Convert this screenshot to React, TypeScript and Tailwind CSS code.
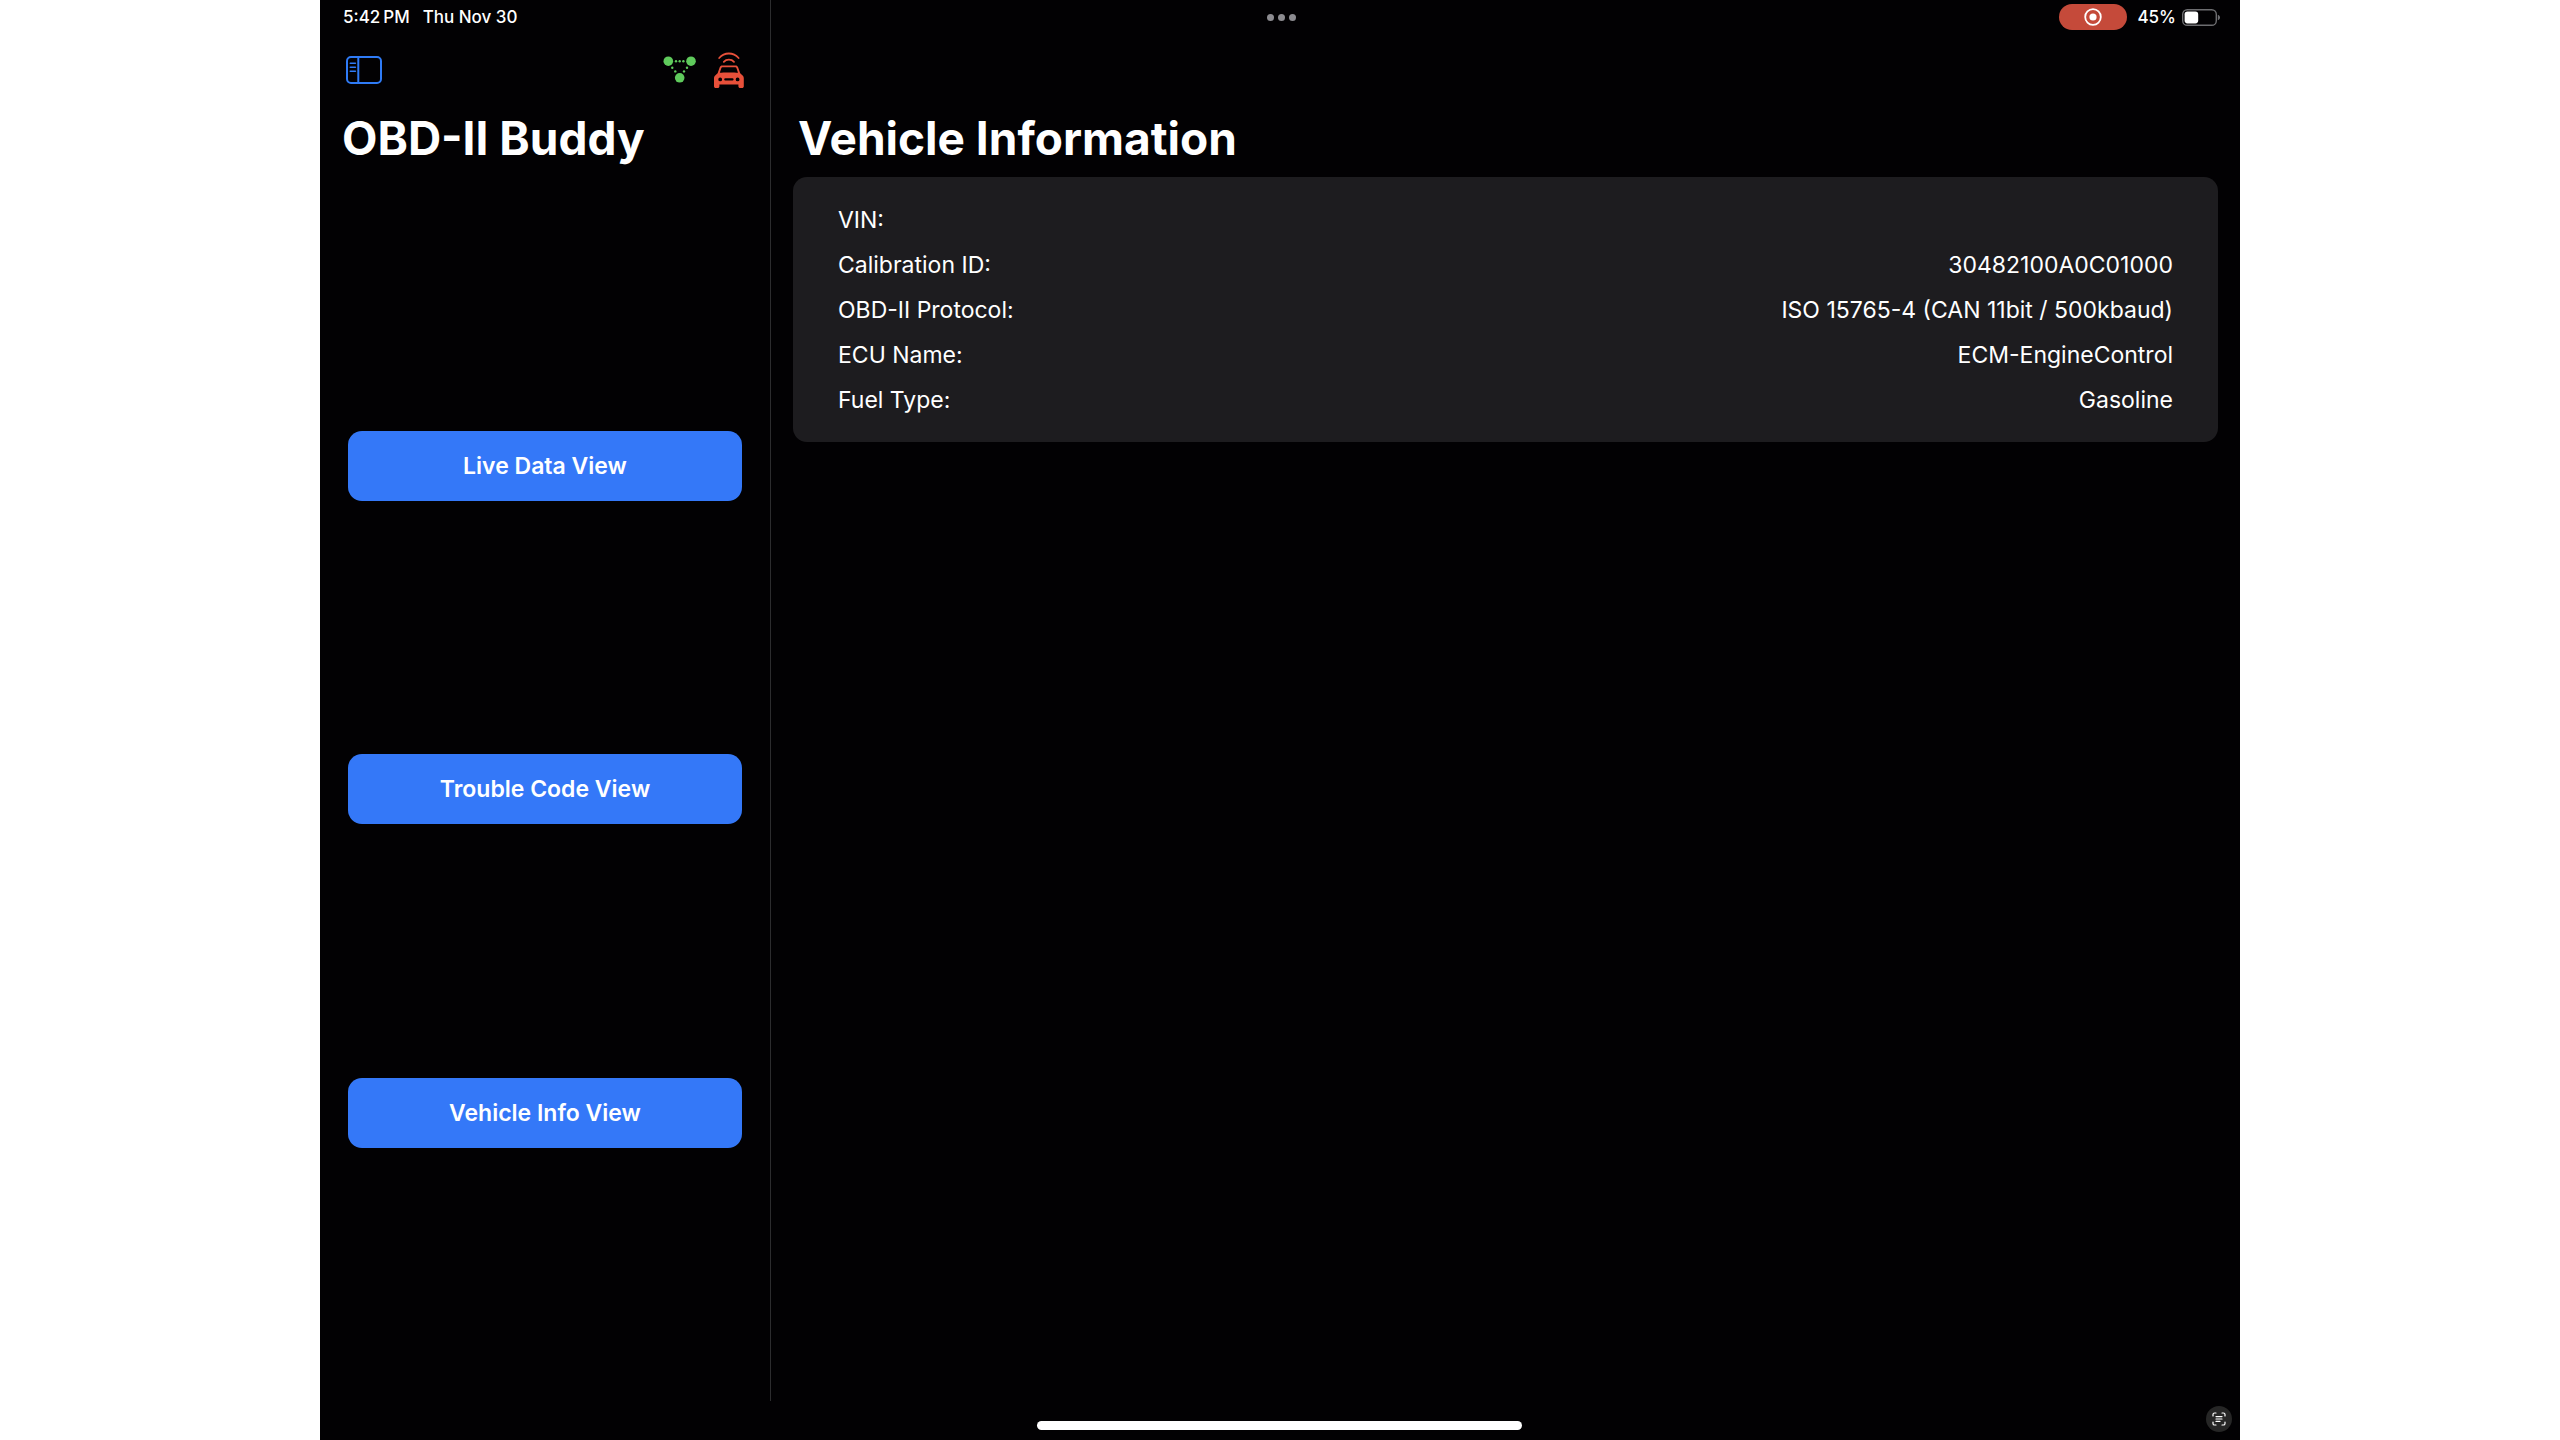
import React from "react";

function SidebarIcon() {
  return (
    <svg width="36" height="28" viewBox="0 0 36 28" fill="none" stroke="currentColor" aria-hidden="true">
      <rect x="1" y="1" width="34" height="26" rx="4" strokeWidth="2" />
      <path d="M12.3 1V27" strokeWidth="2" />
      <path d="M4.3 7.3H9.4M4.3 11.3H9.4M4.3 15.3H9.4" strokeWidth="1.6" strokeLinecap="round" />
    </svg>
  );
}

function NetworkIcon() {
  return (
    <svg width="34" height="28" viewBox="0 0 34 28" fill="currentColor" role="img" aria-label="Adapter connected">
      <circle cx="5.3" cy="5.2" r="4.8" />
      <circle cx="28" cy="5.2" r="4.8" />
      <circle cx="16.7" cy="21.8" r="4.8" />
      <circle cx="13" cy="5.2" r="1.2" />
      <circle cx="16.7" cy="5.2" r="1.2" />
      <circle cx="20.4" cy="5.2" r="1.2" />
      <circle cx="9.3" cy="11.8" r="1.2" />
      <circle cx="12.3" cy="15.4" r="1.2" />
      <circle cx="24" cy="11.8" r="1.2" />
      <circle cx="21" cy="15.4" r="1.2" />
    </svg>
  );
}

function CarIcon() {
  return (
    <svg width="30" height="36" viewBox="0 0 30 36" role="img" aria-label="Vehicle not connected">
      <g fill="none" stroke="currentColor" strokeWidth="1.8" strokeLinecap="round">
        <path d="M5.2 6C10.4 0 19.3 0 24.6 6" />
        <path d="M9.8 9.8C12.4 7 17.4 7 20 9.8" />
      </g>
      <path
        fill="currentColor"
        fillRule="evenodd"
        d="M8.2 13.4H21.6C22.8 13.4 23.6 14 24 15.1L26.2 21.2L28.6 23.4C29.4 24.2 29.8 25 29.8 26.2V34.2C29.8 35.3 29.1 36 28 36H26.2C25.1 36 24.4 35.3 24.4 34.2V32.4H5.4V34.2C5.4 35.3 4.7 36 3.6 36H1.8C0.7 36 0 35.3 0 34.2V26.2C0 25 0.4 24.2 1.2 23.4L3.6 21.2L5.8 15.1C6.2 14 7 13.4 8.2 13.4ZM8.4 15.2C7.9 15.2 7.6 15.4 7.4 15.9L5.8 20.7C9 20.3 20.8 20.3 24 20.7L22.4 15.9C22.2 15.4 21.9 15.2 21.4 15.2ZM6.2 25.5A1.9 1.9 0 1 0 6.2 29.3A1.9 1.9 0 1 0 6.2 25.5ZM23.6 25.5A1.9 1.9 0 1 0 23.6 29.3A1.9 1.9 0 1 0 23.6 25.5ZM11.4 26.2C9.8 26.2 9.8 28.6 11.4 28.6H18.4C20 28.6 20 26.2 18.4 26.2Z"
      />
    </svg>
  );
}

function BatteryIcon() {
  return (
    <svg width="38" height="17" viewBox="0 0 38 17" aria-hidden="true">
      <rect x="0.7" y="0.7" width="33.6" height="15.6" rx="4.6" fill="none" stroke="#6d6d70" strokeWidth="1.4" />
      <rect x="2.6" y="2.6" width="13.6" height="11.8" rx="2.8" fill="#fff" />
      <path d="M35.8 5.8C37.4 6.4 38 7.4 38 8.5S37.4 10.6 35.8 11.2Z" fill="#6d6d70" />
    </svg>
  );
}

function StatusBar() {
  return (
    <header className="absolute inset-x-0 top-0 grid h-[34px] grid-cols-3 items-center pr-5 pl-[23px] text-[17px] leading-none font-medium">
      <div className="flex gap-[13px]">
        <span>5:42&#8239;PM</span>
        <span>Thu Nov 30</span>
      </div>
      <button aria-label="Multitasking" className="flex gap-1 justify-self-center">
        <span className="size-[7px] rounded-full bg-[#8c8b90]" />
        <span className="size-[7px] rounded-full bg-[#8c8b90]" />
        <span className="size-[7px] rounded-full bg-[#8c8b90]" />
      </button>
      <div className="flex items-center justify-end">
        <span className="mr-[10px] flex h-[26px] w-[68px] items-center justify-center rounded-full bg-[#c54a3a]">
          <svg width="18" height="18" viewBox="0 0 18 18" role="img" aria-label="Screen recording">
            <circle cx="9" cy="9" r="7.8" fill="none" stroke="#fff" strokeWidth="1.8" />
            <circle cx="9" cy="9" r="3.6" fill="#fff" />
          </svg>
        </span>
        <span className="mr-[6px]">45%</span>
        <BatteryIcon />
      </div>
    </header>
  );
}

const views = ["Live Data View", "Trouble Code View", "Vehicle Info View"];

const details = [
  { label: "VIN:", value: "" },
  { label: "Calibration ID:", value: "30482100A0C01000" },
  { label: "OBD-II Protocol:", value: "ISO 15765-4 (CAN 11bit / 500kbaud)" },
  { label: "ECU Name:", value: "ECM-EngineControl" },
  { label: "Fuel Type:", value: "Gasoline" },
];

function Sidebar() {
  return (
    <aside className="flex w-[451px] shrink-0 flex-col border-r border-[#2c2c2e] pt-[34px]">
      <div className="flex h-[71px] items-center px-[26px]">
        <button aria-label="Toggle sidebar" className="text-[#2f7bf6]">
          <SidebarIcon />
        </button>
        <div className="ml-auto flex items-center gap-[17px]">
          <span className="text-[#5fca5c]">
            <NetworkIcon />
          </span>
          <span className="text-[#e8503a]">
            <CarIcon />
          </span>
        </div>
      </div>
      <h1 className="h-[72px] px-[22px] text-[46px] leading-[66px] font-bold">OBD-II Buddy</h1>
      <nav className="flex flex-1 flex-col justify-evenly px-7">
        {views.map((view) => (
          <button key={view} className="h-[70px] rounded-[14px] bg-[#3478f8] pt-px text-[23px] font-semibold">
            {view}
          </button>
        ))}
      </nav>
    </aside>
  );
}

function VehicleInformation() {
  return (
    <main className="min-w-0 flex-1 px-[22px] pt-[105px]">
      <h2 className="h-[72px] px-[5px] text-[46px] leading-[66px] font-bold">Vehicle Information</h2>
      <dl className="rounded-[14px] bg-[#1d1c1f] px-[45px] pt-[21px] pb-[19px] text-[23px] leading-[45px]">
        {details.map(({ label, value }) => (
          <div key={label} className="flex justify-between">
            <dt>{label}</dt>
            <dd>{value}</dd>
          </div>
        ))}
      </dl>
    </main>
  );
}

export default function App() {
  return (
    <div className="min-h-screen bg-white">
      <div className="relative mx-auto flex min-h-screen w-3/4 flex-col bg-[#020103] font-['Inter',sans-serif] text-white">
        <StatusBar />
        <div className="flex flex-1">
          <Sidebar />
          <VehicleInformation />
        </div>
        <footer className="grid h-[39px] grid-cols-3 px-2">
          <div className="col-start-2 mt-5 h-[9px] w-[485px] justify-self-center rounded-full bg-white" />
          <button
            aria-label="Live Text"
            className="mt-[5px] flex size-[26px] items-center justify-center justify-self-end rounded-full bg-[#262626]"
          >
            <svg width="14" height="14" viewBox="0 0 14 14" fill="none" stroke="#fff" strokeWidth="1.2" strokeLinecap="round" aria-hidden="true">
              <path d="M1 4V2.6Q1 1 2.6 1H4M10 1H11.4Q13 1 13 2.6V4M13 10V11.4Q13 13 11.4 13H10M4 13H2.6Q1 13 1 11.4V10" />
              <path d="M4 4.6H10M4 7H10M4 9.4H8" />
            </svg>
          </button>
        </footer>
      </div>
    </div>
  );
}
